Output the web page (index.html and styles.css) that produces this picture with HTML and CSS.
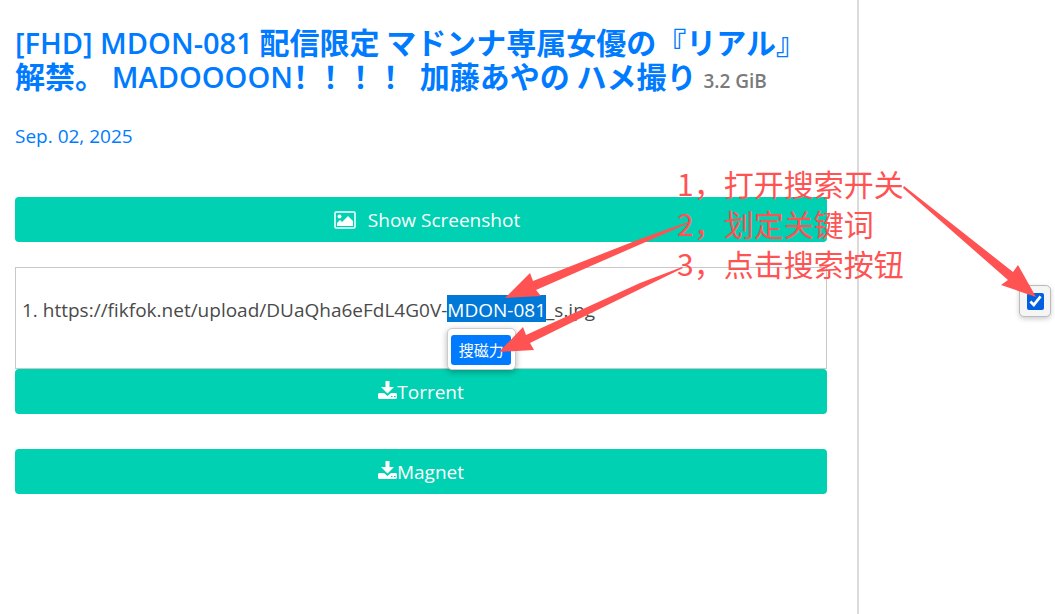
FILE: index.html
```html
<!DOCTYPE html>
<html lang="ja">
<head>
<meta charset="utf-8">
<title>MDON-081</title>
<link rel="stylesheet" href="styles.css">
</head>
<body>
<div class="page">
  <main class="content">
    <h3 class="title"><a href="#"><span class="latin">[FHD] MDON-081</span> 配信限定 マドンナ専属女優の『リアル』解禁。 <span class="latin">MADOOOON</span><span class="marks" lang="zh-CN">！！！！</span> 加藤あやの ハメ撮り</a> <span class="size">3.2 GiB</span></h3>
    <p class="date"><a href="#">Sep. 02, 2025</a></p>
    <button type="button" class="button screenshot">
      <svg class="image-icon" viewBox="0 0 22 18" aria-hidden="true"><rect x="1" y="1" width="20" height="16" rx="1" fill="none" stroke="currentColor" stroke-width="1.500"/><circle cx="5.500" cy="5.500" r="2" fill="currentColor"/><path d="M3 15v-3l3-3 2 2 6-6 5 5v5z" fill="currentColor"/></svg>
      <span class="label">Show Screenshot</span>
    </button>
    <div class="links">
      <span class="link-line">1. https://fikfok.net/upload/DUaQha6eFdL4G0V-<span class="selected">MDON-081<span class="popup"><button type="button" class="search">搜磁力</button></span></span>_s.jpg</span>
    </div>
    <button type="button" class="button torrent"><svg class="download-icon" viewBox="0 0 19 18" aria-hidden="true"><path d="M7.500 0h4v6H16l-6.500 6.500L3 6h4.500zM1 12h5l3.500 3 3.500-3h5l1 1v4l-1 1H1l-1-1v-4z" fill="currentColor"/><path d="M13 15.500h1.500M16 15.500h1.500" stroke="#00d1b2"/></svg>Torrent</button>
    <button type="button" class="button magnet"><svg class="download-icon" viewBox="0 0 19 18" aria-hidden="true"><path d="M7.500 0h4v6H16l-6.500 6.500L3 6h4.500zM1 12h5l3.500 3 3.500-3h5l1 1v4l-1 1H1l-1-1v-4z" fill="currentColor"/><path d="M13 15.500h1.500M16 15.500h1.500" stroke="#00d1b2"/></svg>Magnet</button>
  </main>
  <aside class="side"></aside>
  <label class="toggle"><input type="checkbox" checked aria-label="搜索开关"></label>
  <div class="steps" lang="zh-CN">
    <p>1，打开搜索开关</p>
    <p>2，划定关键词</p>
    <p>3，点击搜索按钮</p>
  </div>
  <svg class="arrows" width="1055" height="614" aria-hidden="true" fill="#ff5252">
    <path d="M904 186 L1013 272 L1018 265 L1036 297 L1001 285 L1008 280 L903 188z"/>
    <path d="M689 223 L536 290 L541 296 L505 298 L530 273 L533 281 L640 239 L688 222z"/>
    <path d="M683 268 L530 343 L534 350 L499 352 L523 327 L526 335 L640 283 L682 267z"/>
  </svg>
</div>
</body>
</html>
```

FILE: styles.css
```css
* { box-sizing: border-box; }
body {
  margin: 0;
  background: #fff;
  color: #4a4a4a;
  font: 19px/30px "Open Sans", "Noto Sans CJK JP", sans-serif;
}
a { color: #007bff; text-decoration: none; }
.page {
  position: relative;
  display: flex;
  min-height: 100vh;
  overflow: hidden;
}
.content {
  flex: 1;
  display: flex;
  flex-direction: column;
  padding: 24px 30px 0 15px;
}
.side { width: 198px; border-left: 2px solid #dbdbdb; }
.title {
  margin: 0;
  font: 700 30px/34px "Noto Sans CJK JP", sans-serif;
}
.latin { font: 600 29px/24px "Open Sans", sans-serif; }
.marks { font-family: "Noto Sans CJK SC", sans-serif; }
.size { color: #7a7a7a; font: 600 19px/20px "Open Sans", sans-serif; }
.date { margin: 29px 0 46px; }
.button {
  display: flex;
  align-items: center;
  justify-content: center;
  height: 45px;
  padding: 1px 0 0;
  border: 0;
  border-radius: 4px;
  background: #00d1b2;
  color: #fff;
  font: inherit;
}
.screenshot { padding-left: 12px; }
.image-icon { width: 22px; height: 18px; margin-right: 12px; }
.download-icon { width: 19px; height: 18px; margin-bottom: 4px; }
.links {
  margin-top: 25px;
  padding: 27px 6px 43px;
  border: 1px solid #c8c8c8;
}
.link-line { display: block; white-space: nowrap; }
.selected {
  position: relative;
  display: inline-block;
  padding: 4px 0 0;
  line-height: 23px;
  background: #0078d7;
  color: #fff;
}
.popup {
  position: absolute;
  top: 33px;
  left: 0;
  padding: 6px 4px 4px 3px;
  border: 1px solid #ccc;
  border-radius: 5px;
  background: #fff;
  box-shadow: 0 2px 6px rgba(0, 0, 0, .3);
}
.search {
  display: block;
  width: 60px;
  height: 30px;
  padding: 0;
  border: 0;
  border-radius: 3px;
  background: #007bff;
  color: #fff;
  font: 15px/30px "Noto Sans CJK SC", sans-serif;
}
.magnet { margin-top: 35px; }
.toggle {
  position: absolute;
  top: 285px;
  right: 4px;
  display: grid;
  place-items: center;
  width: 32px;
  height: 32px;
  border: 1px solid #bbb;
  border-radius: 5px;
  background: #f5f5f5;
  box-shadow: 0 2px 5px rgba(0, 0, 0, .2);
}
.toggle input { width: 17px; height: 17px; margin: 0; accent-color: #0060df; }
.steps {
  position: absolute;
  top: 163px;
  left: 677px;
  color: #ff5252;
  font: 30px/40px "Noto Sans CJK SC", sans-serif;
  white-space: nowrap;
}
.steps p { margin: 0; }
.arrows { position: absolute; top: 0; left: 0; pointer-events: none; }
```
